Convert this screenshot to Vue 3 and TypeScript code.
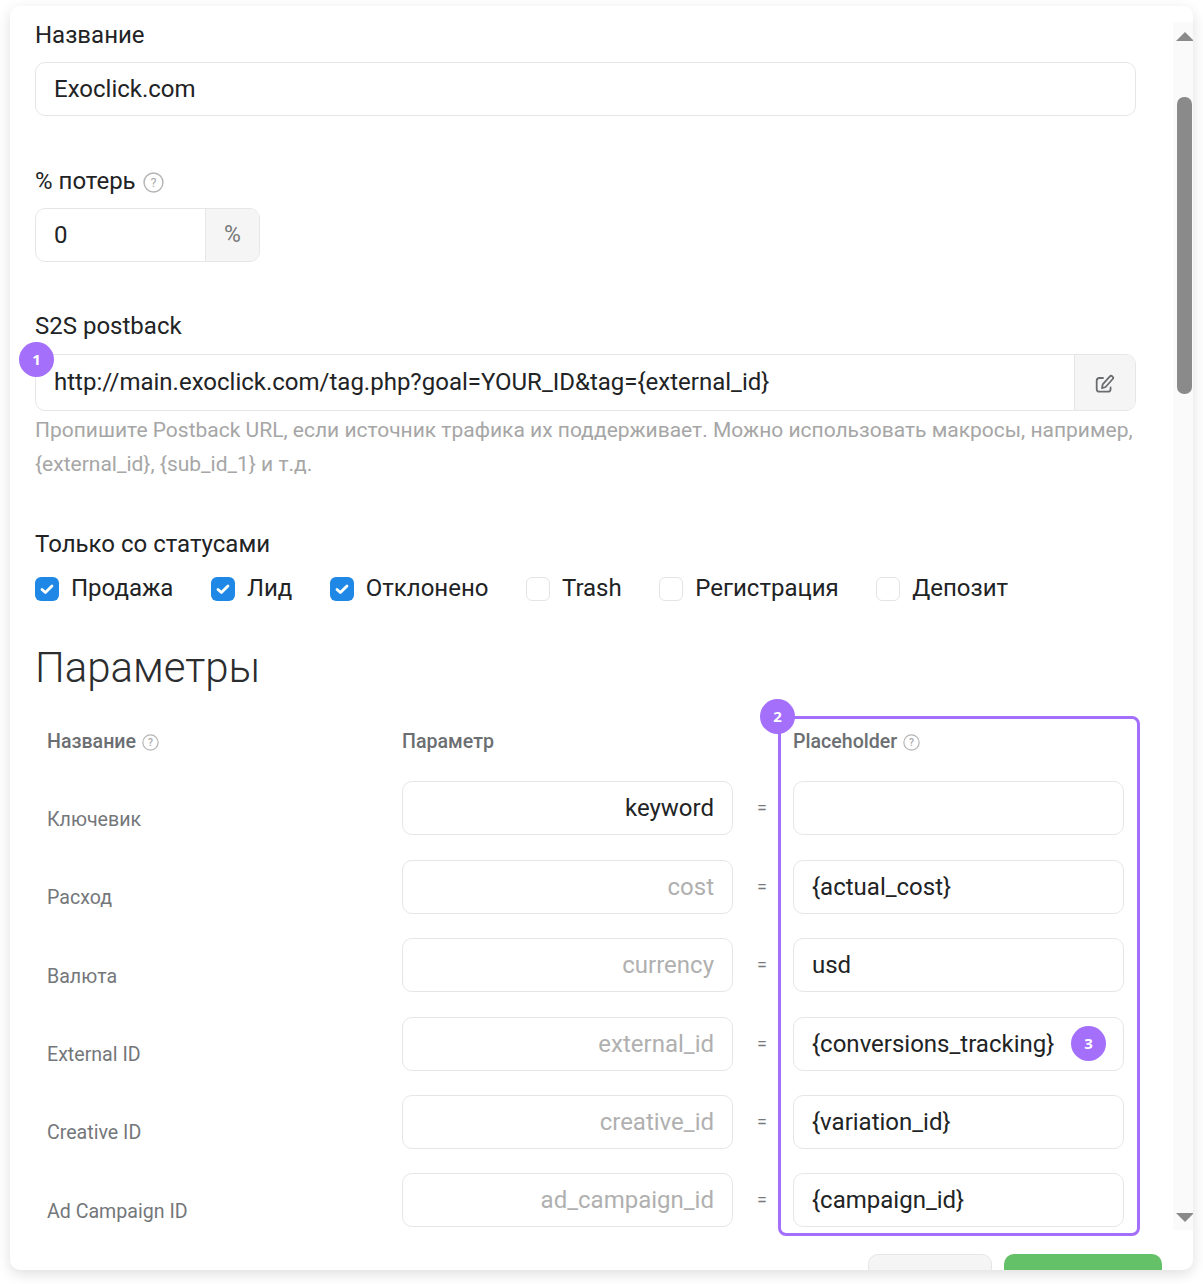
<script setup lang="ts">
interface Status { label: string; checked: boolean }
interface Row { name: string; param: string; filled: boolean; value: string; badge?: string }

const statuses: Status[] = [
  { label: 'Продажа', checked: true },
  { label: 'Лид', checked: true },
  { label: 'Отклонено', checked: true },
  { label: 'Trash', checked: false },
  { label: 'Регистрация', checked: false },
  { label: 'Депозит', checked: false },
]

const rows: Row[] = [
  { name: 'Ключевик', param: 'keyword', filled: true, value: '' },
  { name: 'Расход', param: 'cost', filled: false, value: '{actual_cost}' },
  { name: 'Валюта', param: 'currency', filled: false, value: 'usd' },
  { name: 'External ID', param: 'external_id', filled: false, value: '{conversions_tracking}', badge: '3' },
  { name: 'Creative ID', param: 'creative_id', filled: false, value: '{variation_id}' },
  { name: 'Ad Campaign ID', param: 'ad_campaign_id', filled: false, value: '{campaign_id}' },
]
</script>

<template>
  <div class="page">
    <div class="card">
      <div class="main">
        <div class="label">Название</div>
        <div class="box text-box">Exoclick.com</div>

        <div class="label label-loss">
          % потерь
          <svg class="help" viewBox="0 0 20 20"><circle cx="10" cy="10" r="9" /><text x="10" y="14" text-anchor="middle">?</text></svg>
        </div>
        <div class="box group loss-group">
          <div class="group-main">0</div>
          <div class="addon percent">%</div>
        </div>

        <div class="label label-s2s">S2S postback</div>
        <div class="s2s-wrap">
          <span class="badge badge-1">1</span>
          <div class="box group url-group">
            <div class="group-main">http://main.exoclick.com/tag.php?goal=YOUR_ID&amp;tag={external_id}</div>
            <div class="addon edit">
              <svg viewBox="0 0 20 20" width="20" height="20" fill="none" stroke="#6a6d70" stroke-width="1.8" stroke-linecap="round" stroke-linejoin="round">
                <path d="M8 5H4.5a2.8 2.8 0 0 0-2.8 2.8v8.1a2.8 2.8 0 0 0 2.8 2.8h8.3a2.8 2.8 0 0 0 2.8-2.8v-1.5" />
                <path d="M7 15.2l.7-3.8 7.2-8a1.7 1.7 0 0 1 2.4-.1l.3.3a1.7 1.7 0 0 1 .1 2.4l-7.1 8z" />
              </svg>
            </div>
          </div>
        </div>
        <div class="hint">Пропишите Postback URL, если источник трафика их поддерживает. Можно использовать макросы, например, {external_id}, {sub_id_1} и т.д.</div>

        <div class="label label-status">Только со статусами</div>
        <div class="statuses">
          <div v-for="s in statuses" :key="s.label" class="status">
            <span class="check" :class="{ on: s.checked }">
              <svg v-if="s.checked" viewBox="0 0 24 24" width="24" height="24" fill="none" stroke="#fff" stroke-width="2.8" stroke-linecap="round" stroke-linejoin="round"><path d="M7 12.4l3.4 3.2L17 9" /></svg>
            </span>
            <span class="status-text">{{ s.label }}</span>
          </div>
        </div>

        <h2 class="title">Параметры</h2>

        <div class="table">
          <div class="highlight"><span class="badge badge-2">2</span></div>
          <div class="th">
            Название
            <svg class="help small" viewBox="0 0 20 20"><circle cx="10" cy="10" r="9" /><text x="10" y="14" text-anchor="middle">?</text></svg>
          </div>
          <div class="th">Параметр</div>
          <div></div>
          <div class="th">
            Placeholder
            <svg class="help small" viewBox="0 0 20 20"><circle cx="10" cy="10" r="9" /><text x="10" y="14" text-anchor="middle">?</text></svg>
          </div>
          <template v-for="r in rows" :key="r.name">
            <div class="row-name">{{ r.name }}</div>
            <div class="box param" :class="{ filled: r.filled }">{{ r.param }}</div>
            <div class="eq">=</div>
            <div class="box ph">
              {{ r.value }}
              <span v-if="r.badge" class="badge badge-3">{{ r.badge }}</span>
            </div>
          </template>
        </div>

        <div class="actions">
          <div class="btn btn-cancel"></div>
          <div class="btn btn-save"></div>
        </div>
      </div>

      <div class="scrollbar">
        <span class="arrow up"></span>
        <span class="thumb"></span>
        <span class="arrow down"></span>
      </div>
    </div>
  </div>
</template>

<style>
html, body { margin: 0; background: #fff; }
</style>

<style scoped>
.page {
  width: 1203px;
  height: 1284px;
  box-sizing: border-box;
  padding: 6px 10px 14px;
  overflow: hidden;
  font-family: Roboto, "Noto Sans", sans-serif;
  color: #212325;
}
.card {
  display: flex;
  height: 1264px;
  background: #fff;
  border-radius: 10px;
  box-shadow: 0 4px 14px rgba(0, 0, 0, 0.13);
  overflow: hidden;
}
.main {
  width: 1101px;
  margin-left: 25px;
  padding-top: 12px;
  flex: none;
}
.label {
  font-size: 24px;
  line-height: 34px;
  height: 34px;
  margin-bottom: 10px;
  display: flex;
  align-items: center;
  gap: 7px;
}
.label-loss { margin-top: 48px; }
.label-s2s { margin-top: 47px; margin-bottom: 11px; }
.label-status { margin-top: 46px; margin-bottom: 11px; }
.box {
  box-sizing: border-box;
  height: 54px;
  border: 1.5px solid #e6e6e6;
  border-radius: 10px;
  background: #fff;
  font-size: 24px;
  line-height: 52px;
}
.text-box { padding-left: 18px; }
.group { display: flex; overflow: hidden; }
.group-main { flex: 1; padding-left: 18px; }
.addon {
  flex: none;
  background: #f5f5f5;
  border-left: 1.5px solid #e6e6e6;
  display: flex;
  align-items: center;
  justify-content: center;
  color: #77797c;
}
.loss-group { width: 225px; }
.percent { width: 53px; font-size: 23px; }
.s2s-wrap { position: relative; }
.url-group { height: 57px; line-height: 55px; }
.edit { width: 60px; }
.help { width: 21px; height: 21px; flex: none; margin-top: 2px; }
.help.small { width: 17px; height: 17px; }
.help circle { fill: none; stroke: #b5b5b5; stroke-width: 1.4; }
.help text { font-family: Roboto, sans-serif; font-size: 12px; fill: #a8a8a8; }
.hint {
  margin-top: 2px;
  font-size: 21px;
  line-height: 34px;
  color: #a6a6a6;
  white-space: normal;
}
.badge {
  position: absolute;
  width: 35px;
  height: 35px;
  border-radius: 50%;
  background: #a36ffb;
  color: #fff;
  font-size: 15px;
  font-weight: 700;
  line-height: 35px;
  text-align: center;
  font-family: "Open Sans", Roboto, sans-serif;
}
.badge-1 { left: -16px; top: -12px; z-index: 1; }
.badge-2 { left: -21px; top: -20px; }
.badge-3 { right: 17px; top: 8px; }
.statuses { display: flex; height: 34px; }
.status {
  display: flex;
  align-items: center;
  gap: 12px;
  margin-right: 37.5px;
  font-size: 24px;
}
.status-text { margin-bottom: 2px; }
.check {
  width: 24px;
  height: 24px;
  box-sizing: border-box;
  border: 1.5px solid #e4e4e4;
  border-radius: 6px;
  background: #fff;
  display: block;
  flex: none;
}
.check.on { background: #1f88e6; border: 0; }
.check svg { display: block; }
.title {
  margin: 31px 0 0;
  font-size: 42px;
  line-height: 62px;
  font-weight: 300;
  color: #2b2d2f;
}
.table {
  position: relative;
  margin-top: 27px;
  margin-left: 12px;
  display: grid;
  grid-template-columns: 355px 331px 60px 331px;
  grid-template-rows: 31px repeat(6, 54px);
  row-gap: 24.4px;
}
.highlight {
  position: absolute;
  left: 731px;
  top: -10px;
  width: 362px;
  height: 520px;
  box-sizing: border-box;
  border: 3px solid #a36ffb;
  border-radius: 8px;
}
.th {
  font-size: 19.6px;
  font-weight: 500;
  color: #6c6f72;
  display: flex;
  align-items: center;
  gap: 6px;
}
.row-name {
  font-size: 19.6px;
  color: #74777a;
  display: flex;
  align-items: center;
  padding-top: 22px;
}
.param {
  text-align: right;
  padding-right: 18px;
  color: #b0b0b0;
}
.param.filled { color: #212325; }
.eq {
  padding-right: 2px;
  text-align: center;
  font-size: 18px;
  line-height: 54px;
  color: #77797c;
}
.ph { padding-left: 18px; position: relative; }
.actions {
  display: flex;
  justify-content: flex-end;
  gap: 12px;
  margin-top: 26.6px;
  margin-right: -26px;
}
.btn {
  height: 60px;
  box-sizing: border-box;
  border-radius: 10px;
  flex: none;
}
.btn-cancel { width: 124px; background: #f5f5f5; border: 1.5px solid #e6e6e6; }
.btn-save { width: 158px; background: #65c168; }
.scrollbar {
  flex: none;
  margin-left: 37px;
  width: 20px;
  height: 1208px;
  margin-top: 16px;
  background: #fafafa;
  display: flex;
  flex-direction: column;
  align-items: center;
}
.arrow {
  width: 0;
  height: 0;
  margin-left: 3px;
  border-left: 9px solid transparent;
  border-right: 9px solid transparent;
  flex: none;
}
.arrow.up { border-bottom: 9px solid #8a8a8a; margin-top: 10px; }
.thumb {
  width: 15px;
  height: 297px;
  margin-top: 56px;
  margin-left: 3px;
  border-radius: 7px;
  background: #8a8a8a;
  flex: none;
}
.arrow.down { border-top: 9px solid #8a8a8a; margin-top: auto; margin-bottom: 8px; }
</style>
